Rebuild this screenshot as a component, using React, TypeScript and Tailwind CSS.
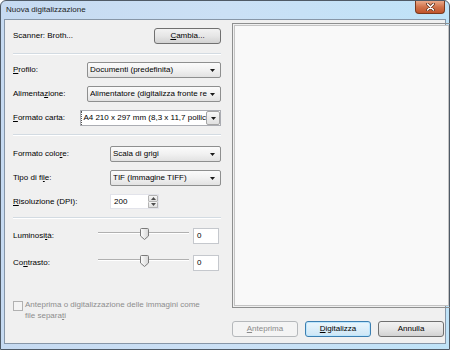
import React from "react";

const font = "font-['Liberation_Sans',Arial,sans-serif]";

function Arrow() {
  return (
    <svg width="5" height="3" viewBox="0 0 5 3" className="shrink-0">
      <path d="M0 0 H5 L2.5 3 Z" fill="#1a1a1a" />
    </svg>
  );
}

function Combo({ text, className }: { text: string; className: string }) {
  return (
    <div
      className={`flex h-[16px] items-center rounded-[2px] border border-[#8e8f8f] bg-gradient-to-b from-[#fbfbfb] via-[#f1f1f1] to-[#e2e2e2] pl-[2px] pr-[5px] ${className}`}
    >
      <span className="flex-1 overflow-hidden whitespace-nowrap">{text}</span>
      <Arrow />
    </div>
  );
}

function EditCombo({ text, className }: { text: string; className: string }) {
  return (
    <div className={`flex h-[16px] items-stretch border border-[#abadb3] bg-white ${className}`}>
      <span className="flex flex-1 items-center overflow-hidden whitespace-nowrap border-l border-dotted border-[#555] pl-[1px]">
        {text}
      </span>
      <div className="flex w-[14px] items-center justify-center rounded-[2px] border border-[#a5a5a5] bg-gradient-to-b from-[#f8f8f8] to-[#e0e0e0]">
        <Arrow />
      </div>
    </div>
  );
}

function Separator({ className }: { className: string }) {
  return <div className={`h-[2px] border-t border-[#d3dbe2] border-b border-b-white ${className}`} />;
}

function Slider() {
  return (
    <div className="relative h-[16px] w-[91px]">
      <div className="absolute left-0 right-0 top-[4px] h-[2px] border-t border-[#b0b0b0] border-b border-b-white" />
      <svg width="9" height="12" viewBox="0 0 9 12" className="absolute left-[42px] top-0">
        <defs>
          <linearGradient id="thumb" x1="0" x2="1" y1="0" y2="0">
            <stop offset="0" stopColor="#fdfdfd" />
            <stop offset="1" stopColor="#d6d6d6" />
          </linearGradient>
        </defs>
        <path d="M1.5 0.5 H7.5 Q8.5 0.5 8.5 1.5 V8 L4.5 11.5 L0.5 8 V1.5 Q0.5 0.5 1.5 0.5 Z" fill="url(#thumb)" stroke="#7a7a7a" />
      </svg>
    </div>
  );
}

function ValueBox() {
  return (
    <div className="flex h-[16px] w-[26px] items-center border border-[#c5c8cd] bg-white pl-[3px]">0</div>
  );
}

function Button({ children, kind }: { children: React.ReactNode; kind?: "default" | "disabled" }) {
  const look =
    kind === "disabled"
      ? "border-[#b5b8bb] bg-[#f4f4f4] text-[#8a8a8a]"
      : kind === "default"
        ? "border-[#3c7fb1] bg-gradient-to-b from-[#eaf6fd] to-[#cde6f6] shadow-[inset_0_0_0_1px_#bde6fd]"
        : "border-[#707070] bg-gradient-to-b from-[#f2f2f2] via-[#e6e6e6] to-[#d2d2d2]";
  return (
    <div className={`flex h-[16px] w-[66px] items-center justify-center rounded-[3px] border ${look}`}>
      {children}
    </div>
  );
}

export default function App() {
  return (
    <div className={`${font} text-[8px] text-black w-[450px] h-[350px]`}>
      <div className="relative flex h-[350px] w-[450px] flex-col rounded-t-[6px] border border-[#4f5a66] bg-gradient-to-r from-[#c6daf1] via-[#cbe0f5] to-[#bfe3f8] px-[3px] pb-[5px]">
        {/* title bar */}
        <div className="flex h-[18px] items-center pl-[2px] text-[#1c1c1c]">Nuova digitalizzazione</div>
        <div className="absolute right-[4px] top-0 flex h-[13px] w-[30px] items-center justify-center rounded-b-[4px] border border-t-0 border-[#7a3a1e] bg-gradient-to-b from-[#eaa989] via-[#d0734b] to-[#c0532a]">
          <svg width="9" height="8" viewBox="0 0 9 8">
            <path d="M1.5 1 L7.5 7 M7.5 1 L1.5 7" stroke="#5a2a15" strokeWidth="3" strokeLinecap="round" />
            <path d="M1.5 1 L7.5 7 M7.5 1 L1.5 7" stroke="#ffffff" strokeWidth="1.6" strokeLinecap="round" />
          </svg>
        </div>

        {/* client area */}
        <div className="flex flex-1 border border-[#8796a7] bg-[#f0f0f0]">
          {/* left form */}
          <div className="flex w-[216px] flex-col pl-[8px]">
            <div className="mt-[8px] flex h-[16px] items-center justify-between">
              <span>Scanner: Broth...</span>
              <div className="flex h-[16px] w-[67px] items-center justify-center rounded-[3px] border border-[#707070] bg-gradient-to-b from-[#f2f2f2] via-[#e6e6e6] to-[#d2d2d2]">
                <span><u>C</u>ambia...</span>
              </div>
            </div>
            <Separator className="mt-[9px]" />

            <div className="mt-[7px] flex items-center">
              <span className="w-[74px]"><u>P</u>rofilo:</span>
              <Combo text="Documenti (predefinita)" className="flex-1" />
            </div>
            <div className="mt-[8px] flex items-center">
              <span className="w-[74px]">Alimenta<u>z</u>ione:</span>
              <Combo text="Alimentatore (digitalizza fronte re" className="flex-1" />
            </div>
            <div className="mt-[8px] flex items-center">
              <span className="w-[74px]"><u>F</u>ormato carta:</span>
              <EditCombo text="A4 210 x 297 mm (8,3 x 11,7 pollic" className="flex-1" />
            </div>
            <Separator className="mt-[8px]" />

            <div className="mt-[10px] flex items-center">
              <span className="w-[97px]">Formato colo<u>r</u>e:</span>
              <Combo text="Scala di grigi" className="flex-1" />
            </div>
            <div className="mt-[8px] flex items-center">
              <span className="w-[97px]">Tipo di fi<u>l</u>e:</span>
              <Combo text="TIF (Immagine TIFF)" className="flex-1" />
            </div>
            <div className="mt-[8px] flex items-center">
              <span className="w-[97px]"><u>R</u>isoluzione (DPI):</span>
              <div className="flex h-[15px] w-[49px] items-stretch border border-[#e2e3ea] bg-white">
                <span className="flex flex-1 items-center pl-[3px]">200</span>
                <div className="flex w-[10px] flex-col">
                  <div className="flex flex-1 items-center justify-center rounded-[1px] border border-[#b4b4b4] bg-gradient-to-b from-[#f6f6f6] to-[#e0e0e0]">
                    <svg width="5" height="3" viewBox="0 0 5 3"><path d="M0 3 H5 L2.5 0 Z" fill="#4d4d4d" /></svg>
                  </div>
                  <div className="flex flex-1 items-center justify-center rounded-[1px] border border-t-0 border-[#b4b4b4] bg-gradient-to-b from-[#f6f6f6] to-[#e0e0e0]">
                    <svg width="5" height="3" viewBox="0 0 5 3"><path d="M0 0 H5 L2.5 3 Z" fill="#4d4d4d" /></svg>
                  </div>
                </div>
              </div>
            </div>
            <Separator className="mt-[8px]" />

            <div className="mt-[9px] flex items-center">
              <span className="w-[85px]">Luminosi<u>t</u>à:</span>
              <Slider />
              <div className="ml-[4px]">
                <ValueBox />
              </div>
            </div>
            <div className="mt-[11px] flex items-center">
              <span className="w-[85px]">Co<u>n</u>trasto:</span>
              <Slider />
              <div className="ml-[4px]">
                <ValueBox />
              </div>
            </div>

            <div className="mt-[28px] flex items-start gap-[2px] text-[#8d8d8d]">
              <div className="mt-[2px] h-[10px] w-[10px] shrink-0 border border-[#b1b1b1] bg-[#f4f4f4]" />
              <div className="leading-[11px]">
                Anteprima o digitalizzazione delle immagini come
                <br />
                file separa<u>t</u>i
              </div>
            </div>
          </div>

          {/* right side */}
          <div className="ml-[11px] flex flex-1 flex-col pr-[4px]">
            <div className="mt-[3px] h-[285px] border border-[#8e8f8f] p-[1px]">
              <div className="h-full border border-[#c4c4c4] bg-[#f9f9f9]" />
            </div>
            <div className="mr-[7px] mt-[13px] flex justify-end gap-[7px]">
              <Button kind="disabled"><u>A</u>nteprima</Button>
              <Button kind="default"><span><u>D</u>igitalizza</span></Button>
              <Button>Annulla</Button>
            </div>
          </div>
        </div>
      </div>
    </div>
  );
}
